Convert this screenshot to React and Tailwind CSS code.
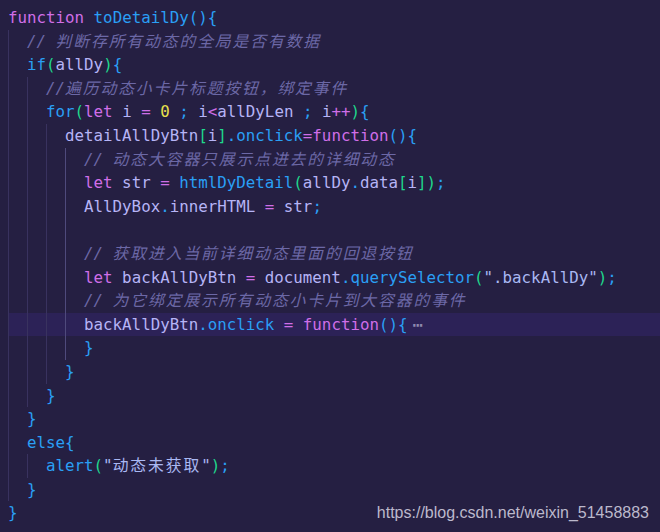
import React from "react";

const K = "text-[#d06ee8]";
const F = "text-[#2a9ff5]";
const V = "text-[#b6b4f6]";
const G = "text-[#1fd88c]";
const Y = "text-[#e9e14c]";
const C = "text-[#6c68a6] italic";
const S = "text-[#a9b8f3]";
const D = "text-[#8c88ad]";

const isCJK = (ch) => /[\u3000-\u9fff\uff00-\uffef]/.test(ch);

function Tok({ t, c }) {
  const parts = [];
  let buf = "";
  let cjk = null;
  for (const ch of t) {
    const k = isCJK(ch);
    if (cjk === null || k === cjk) {
      buf += ch;
    } else {
      parts.push([buf, cjk]);
      buf = ch;
    }
    cjk = k;
  }
  if (buf) parts.push([buf, cjk]);
  return (
    <span className={c}>
      {parts.map(([s, k], i) =>
        k ? (
          <span key={i} className="tracking-[1.9px]">
            {s}
          </span>
        ) : (
          <span key={i}>{s}</span>
        )
      )}
    </span>
  );
}

const lines = [
  { g: 0, t: [["function", K], [" ", V], ["toDetailDy", F], ["(){", F]] },
  { g: 1, t: [["// 判断存所有动态的全局是否有数据", C]] },
  { g: 1, t: [["if", F], ["(", G], ["allDy", V], [")", G], ["{", F]] },
  { g: 2, t: [["//遍历动态小卡片标题按钮，绑定事件", C]] },
  {
    g: 2,
    t: [
      ["for", F], ["(", G], ["let", K], [" i ", V], ["=", K], [" ", V], ["0", Y],
      [" ; ", F], ["i", V], ["<", K], ["allDyLen", V], [" ; ", F], ["i", V],
      ["++", K], [")", G], ["{", F],
    ],
  },
  {
    g: 3,
    t: [
      ["detailAllDyBtn", V], ["[", G], ["i", V], ["]", G], [".", F], ["onclick", F],
      ["=", K], ["function", K], ["(){", F],
    ],
  },
  { g: 4, t: [["// 动态大容器只展示点进去的详细动态", C]] },
  {
    g: 4,
    t: [
      ["let", K], [" str ", V], ["=", K], [" ", V], ["htmlDyDetail", F], ["(", G],
      ["allDy", V], [".", F], ["data", V], ["[", G], ["i", V], ["]", G], [")", G], [";", F],
    ],
  },
  { g: 4, t: [["AllDyBox", V], [".", F], ["innerHTML", V], [" = ", K], ["str", V], [";", F]] },
  { g: 4, t: [] },
  { g: 4, t: [["// 获取进入当前详细动态里面的回退按钮", C]] },
  {
    g: 4,
    t: [
      ["let", K], [" backAllDyBtn ", V], ["=", K], [" document", V], [".", F],
      ["querySelector", F], ["(", G], ['".backAllDy"', S], [")", G], [";", F],
    ],
  },
  { g: 4, t: [["// 为它绑定展示所有动态小卡片到大容器的事件", C]] },
  {
    g: 4,
    hl: true,
    fold: true,
    t: [
      ["backAllDyBtn", V], [".", F], ["onclick", F], [" = ", K], ["function", K], ["(){", F],
    ],
  },
  { g: 4, t: [["}", F]] },
  { g: 3, t: [["}", F]] },
  { g: 2, t: [["}", F]] },
  { g: 1, t: [["}", F]] },
  { g: 1, t: [["else", F], ["{", F]] },
  { g: 2, t: [["alert", F], ["(", G], ['"动态未获取"', S], [")", G], [";", F]] },
  { g: 1, t: [["}", F]] },
  { g: 0, t: [["}", F]] },
];

export default function App() {
  return (
    <div className="relative w-[660px] h-[532px] overflow-hidden bg-[#251f42]">
      <div className="pt-[6px] pl-[8px] font-['DejaVu_Sans_Mono','Noto_Sans_CJK_SC',monospace] text-[15.8px] leading-[23.6px] whitespace-pre">
        {lines.map((ln, i) => (
          <div
            key={i}
            className={"flex h-[23.6px] " + (ln.hl ? "bg-[#2c2257]" : "")}
          >
            {Array.from({ length: ln.g }).map((_, j) => {
              const active = j === 3 && i >= 6 && i <= 14;
              return (
                <span
                  key={j}
                  className={
                    "inline-block w-[2ch] h-full border-l " +
                    (active ? "border-[#4f4a7c]" : "border-[#39325f]")
                  }
                />
              );
            })}
            {ln.t.map(([t, c], j) => (
              <Tok key={j} t={t} c={c} />
            ))}
            {ln.fold && (
              <span className={"ml-[5px] text-[18px] " + D}>⋯</span>
            )}
          </div>
        ))}
      </div>
      <div className="absolute right-[11px] bottom-[10px] font-['Liberation_Sans',Arial,sans-serif] text-[16px] leading-[18px] text-[#bcb9cc]">
        https://blog.csdn.net/weixin_51458883
      </div>
    </div>
  );
}
